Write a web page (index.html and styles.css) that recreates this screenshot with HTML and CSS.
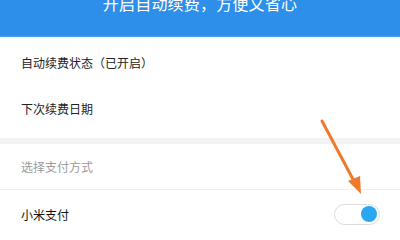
FILE: index.html
```html
<!DOCTYPE html>
<html lang="zh">
<head>
<meta charset="utf-8">
<link rel="stylesheet" href="styles.css">
</head>
<body>
<div class="page">
  <header class="banner"><div class="banner-text">开启自动续费，方便又省心</div></header>
  <section class="group first">
    <div class="row r1">自动续费状态（已开启）</div>
    <div class="row r2">下次续费日期</div>
  </section>
  <div class="gap"></div>
  <section class="group">
    <div class="row label">选择支付方式</div>
    <div class="row pay"><span>小米支付</span><span class="toggle"><span class="knob"></span></span></div>
  </section>
  <svg class="arrow" width="400" height="240" viewBox="0 0 400 240">
    <line x1="322" y1="121" x2="355" y2="183" stroke="#f07a2c" stroke-width="3" stroke-linecap="round"/>
    <polygon points="361,194 348,181 360,176" fill="#f07a2c"/>
  </svg>
</div>
</body>
</html>
```
FILE: styles.css
```css
html, body { margin: 0; padding: 0; background: #fff; }
.page {
  width: 400px; height: 240px; overflow: hidden; position: relative;
  font-family: "Noto Sans CJK SC", "Noto Sans", sans-serif;
}
.banner {
  height: 37px; background: #2d8fe9; overflow: hidden;
  display: flex; justify-content: center;
  border-bottom: 1px solid #4aa0ee; box-sizing: border-box;
}
.banner-text {
  color: #fff; font-size: 16px; line-height: 16px; margin-top: -5px;
  letter-spacing: 0.2px;
}
.group { background: #fff; }
.group.first { padding-bottom: 9px; }
.row {
  display: flex; align-items: center; justify-content: space-between;
  padding: 0 20px 0 21px; font-size: 12px; color: #222;
}
.r1 { height: 50px; }
.r2 { height: 42px; }
.gap { height: 6px; background: #f3f3f3; }
.label { height: 45px; color: #9a9a9a; border-bottom: 1px solid #efefef; }
.pay { height: 48px; color: #111; }
.toggle {
  width: 46px; height: 21px; border: 1px solid #dcdcdc; border-radius: 11px;
  box-sizing: border-box; display: flex; align-items: center; justify-content: flex-end;
  padding-right: 2px; background: #fff;
}
.knob { width: 16px; height: 16px; border-radius: 50%; background: #2aa6f2; }
.arrow { position: absolute; left: 0; top: 0; }
```
